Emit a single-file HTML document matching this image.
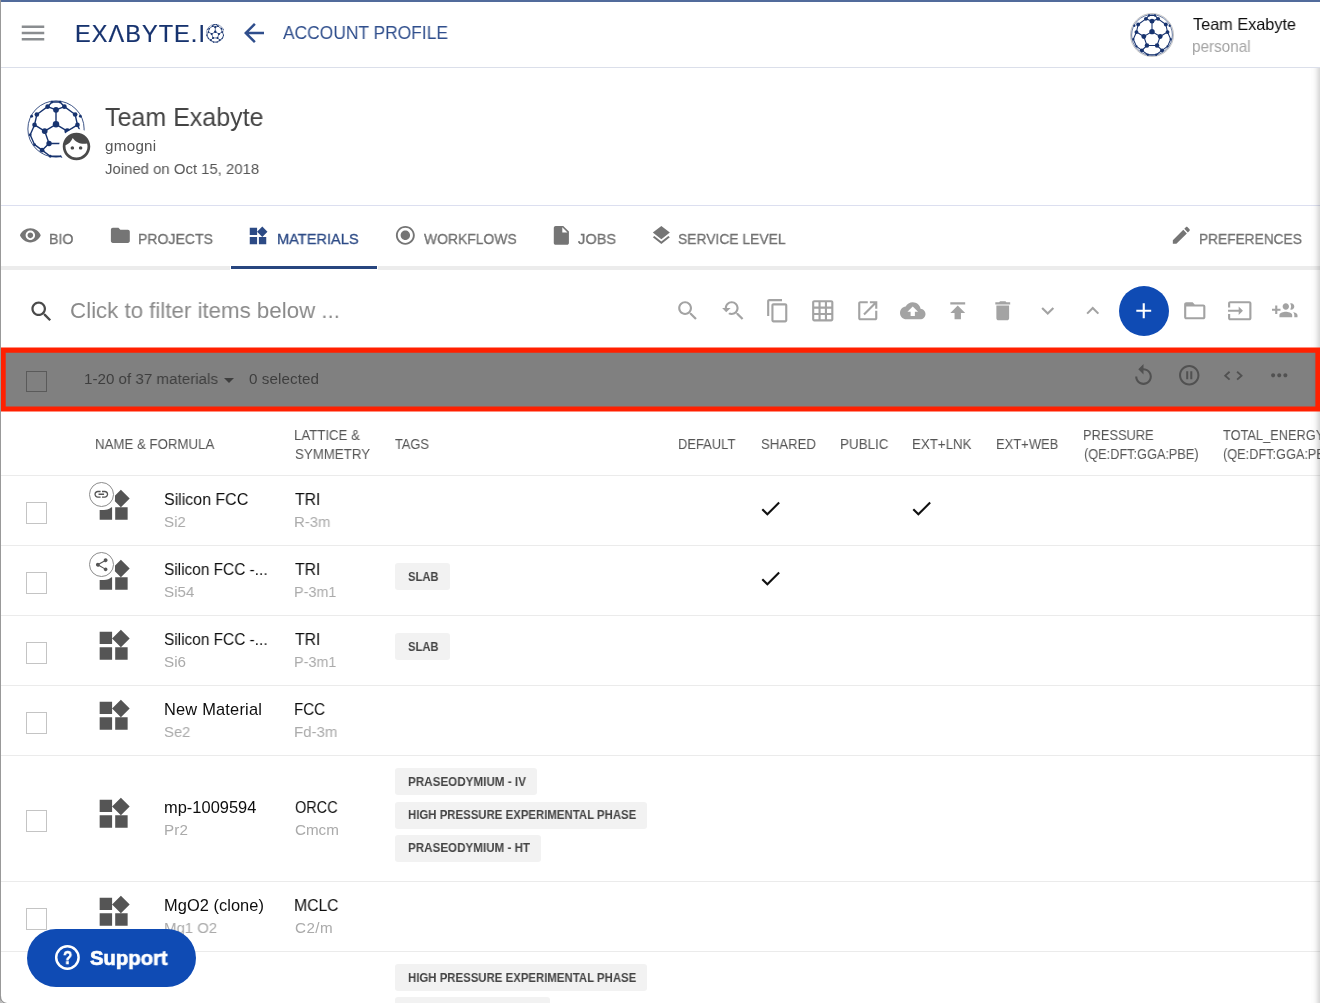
<!DOCTYPE html>
<html lang="en">
<head>
<meta charset="utf-8">
<title>Account Profile - Materials</title>
<style>
html,body{margin:0;padding:0;}
body{width:1320px;height:1003px;position:relative;overflow:hidden;background:#fff;font-family:"Liberation Sans",Arial,sans-serif;}
.t{position:absolute;white-space:pre;z-index:5;margin:0;transform-origin:0 50%;will-change:transform;}
.t.top{z-index:12;}
.i{position:absolute;z-index:5;display:block;}
.b{position:absolute;z-index:1;}
.hl{position:absolute;left:1px;width:1319px;height:1px;z-index:1;}
.cb{position:absolute;width:19px;height:20px;border:1px solid #c4c4c4;background:#fff;z-index:4;}
.chip{position:absolute;height:27px;background:#f2f2f2;border-radius:3px;z-index:2;}
</style>
</head>
<body>
<div class="b" style="left:0px;top:0px;width:1320px;height:2px;background:#516b9b;z-index:9;"></div>
<div class="b" style="left:0px;top:0px;width:1px;height:1003px;background:#999999;z-index:9;"></div>
<div class="hl" style="top:67px;background:#dbdfea;left:1px;width:1319px"></div>
<div class="hl" style="top:205px;background:#dcdff0;left:1px;width:1319px"></div>
<div class="b" style="left:1px;top:266px;width:1319px;height:4px;background:#ececec;z-index:1;"></div>
<div class="b" style="left:230px;top:266px;width:148px;height:4px;background:#ffffff;z-index:2;"></div>
<div class="b" style="left:231px;top:266px;width:146px;height:3px;background:#28467f;z-index:3;"></div>
<svg class="i" style="left:18.45px;top:17.5px;" width="30" height="30" viewBox="0 0 24 24"><path fill="#8a8d90" d="M3 18h18v-2H3v2zm0-5h18v-2H3v2zm0-7v2h18V6H3z"/></svg>
<svg class="i" style="left:238.7px;top:17.85px;" width="30" height="30" viewBox="0 0 24 24"><path fill="#2f4e8c" d="M20 11H7.83l5.59-5.59L12 4l-8 8 8 8 1.41-1.41L7.83 13H20v-2z"/></svg>
<svg class="i" style="left:18.849999999999998px;top:224.3px;" width="22.7" height="22.7" viewBox="0 0 24 24"><path fill="#757575" d="M12 4.5C7 4.5 2.73 7.61 1 12c1.73 4.39 6 7.5 11 7.5s9.27-3.11 11-7.5c-1.73-4.39-6-7.5-11-7.5zM12 17c-2.76 0-5-2.24-5-5s2.24-5 5-5 5 2.24 5 5-2.24 5-5 5zm0-8c-1.66 0-3 1.34-3 3s1.34 3 3 3 3-1.34 3-3-1.34-3-3-3z"/></svg>
<svg class="i" style="left:108.85000000000001px;top:224.3px;" width="22.7" height="22.7" viewBox="0 0 24 24"><path fill="#757575" d="M10 4H4c-1.1 0-1.99.9-1.99 2L2 18c0 1.1.9 2 2 2h16c1.1 0 2-.9 2-2V8c0-1.1-.9-2-2-2h-8l-2-2z"/></svg>
<svg class="i" style="left:393.84999999999997px;top:224.3px;" width="22.7" height="22.7" viewBox="0 0 24 24"><path fill="#757575" d="M12 7c-2.76 0-5 2.24-5 5s2.24 5 5 5 5-2.24 5-5-2.24-5-5-5zm0-5C6.48 2 2 6.48 2 12s4.48 10 10 10 10-4.48 10-10S17.52 2 12 2zm0 18c-4.42 0-8-3.58-8-8s3.58-8 8-8 8 3.58 8 8-3.58 8-8 8z"/></svg>
<svg class="i" style="left:549.9499999999999px;top:224.3px;" width="22.7" height="22.7" viewBox="0 0 24 24"><path fill="#757575" d="M6 2c-1.1 0-1.99.9-1.99 2L4 20c0 1.1.89 2 1.99 2H18c1.1 0 2-.9 2-2V8l-6-6H6zm7 7V3.5L18.5 9H13z"/></svg>
<svg class="i" style="left:649.85px;top:224.3px;" width="22.7" height="22.7" viewBox="0 0 24 24"><path fill="#757575" d="M11.99 18.54l-7.37-5.73L3 14.07l9 7 9-7-1.63-1.27-7.38 5.74zM12 16l7.36-5.73L21 9l-9-7-9 7 1.63 1.27L12 16z"/></svg>
<svg class="i" style="left:1170.25px;top:224.3px;" width="22.7" height="22.7" viewBox="0 0 24 24"><path fill="#757575" d="M3 17.25V21h3.75L17.81 9.94l-3.75-3.75L3 17.25zM20.71 7.04c.39-.39.39-1.02 0-1.41l-2.34-2.34c-.39-.39-1.02-.39-1.41 0l-1.83 1.83 3.75 3.75 1.83-1.83z"/></svg>
<svg class="i" style="left:247.25px;top:224.85px;" width="22" height="22" viewBox="0 0 24 24"><path fill="#2c4a85" d="M13 13v8h8v-8h-8zM3 21h8v-8H3v8zM3 3v8h8V3H3zm13.66-1.31L11 7.34 16.66 13l5.66-5.66-5.66-5.65z"/></svg>
<svg class="i" style="left:27.9px;top:297.9px;" width="27" height="27" viewBox="0 0 24 24"><path fill="#4a4a4a" d="M15.5 14h-.79l-.28-.27C15.41 12.59 16 11.11 16 9.5 16 5.91 13.09 3 9.5 3S3 5.910 3 9.500 5.910 16 9.500 16c1.610 0 3.090-.59 4.230-1.570l.27.28v.79l5 4.990L20.490 19l-4.990-5zm-6 0C7.010 14 5 11.990 5 9.500S7.010 5 9.500 5 14 7.010 14 9.500 11.990 14 9.500 14z"/></svg>
<svg class="i" style="left:675.25px;top:297.85px;" width="25.5" height="25.5" viewBox="0 0 24 24"><path fill="#a3a3a3" d="M15.5 14h-.79l-.28-.27C15.41 12.59 16 11.11 16 9.5 16 5.91 13.09 3 9.5 3S3 5.910 3 9.500 5.910 16 9.500 16c1.610 0 3.090-.59 4.230-1.570l.27.28v.79l5 4.990L20.490 19l-4.990-5zm-6 0C7.010 14 5 11.990 5 9.500S7.010 5 9.500 5 14 7.010 14 9.500 11.990 14 9.500 14z"/></svg>
<svg class="i" style="left:720.25px;top:297.85px;" width="25.5" height="25.5" viewBox="0 0 24 24"><path fill="#a3a3a3" d="M17.01 14h-.8l-.27-.27c.98-1.14 1.57-2.61 1.57-4.23 0-3.590-2.910-6.500-6.500-6.500s-6.500 3-6.500 6.500H2l3.840 4 4.160-4H6.510C6.510 7 8.530 5 11.010 5s4.500 2.010 4.500 4.500c0 2.480-2.020 4.500-4.500 4.500-.65 0-1.260-.14-1.820-.38L7.710 15.100c.97.57 2.090.9 3.300.9 1.610 0 3.080-.59 4.220-1.570l.27.27v.79l5.010 4.990L22 19l-4.990-5z"/></svg>
<svg class="i" style="left:765.25px;top:297.85px;" width="25.5" height="25.5" viewBox="0 0 24 24"><path fill="#a3a3a3" d="M16 1H4c-1.1 0-2 .9-2 2v14h2V3h12V1zm3 4H8c-1.100 0-2 .9-2 2v14c0 1.100.9 2 2 2h11c1.100 0 2-.9 2-2V7c0-1.100-.9-2-2-2zm0 16H8V7h11v14z"/></svg>
<svg class="i" style="left:810.25px;top:297.85px;" width="25.5" height="25.5" viewBox="0 0 24 24"><path fill="#a3a3a3" d="M20 2H4c-1.1 0-2 .9-2 2v16c0 1.100.9 2 2 2h16c1.100 0 2-.9 2-2V4c0-1.100-.9-2-2-2zM8 20H4v-4h4v4zm0-6H4v-4h4v4zm0-6H4V4h4v4zm6 12h-4v-4h4v4zm0-6h-4v-4h4v4zm0-6h-4V4h4v4zm6 12h-4v-4h4v4zm0-6h-4v-4h4v4zm0-6h-4V4h4v4z"/></svg>
<svg class="i" style="left:855.25px;top:297.85px;" width="25.5" height="25.5" viewBox="0 0 24 24"><path fill="#a3a3a3" d="M19 19H5V5h7V3H5c-1.11 0-2 .9-2 2v14c0 1.100.89 2 2 2h14c1.100 0 2-.9 2-2v-7h-2v7zM14 3v2h3.590l-9.830 9.830 1.410 1.410L19 6.410V10h2V3h-7z"/></svg>
<svg class="i" style="left:900.25px;top:297.85px;" width="25.5" height="25.5" viewBox="0 0 24 24"><path fill="#a3a3a3" d="M19.35 10.04C18.67 6.59 15.64 4 12 4 9.110 4 6.600 5.640 5.350 8.040 2.340 8.360 0 10.910 0 14c0 3.310 2.690 6 6 6h13c2.760 0 5-2.240 5-5 0-2.640-2.050-4.780-4.650-4.960zM14 13v4h-4v-4H7l5-5 5 5h-3z"/></svg>
<svg class="i" style="left:945.25px;top:297.85px;" width="25.5" height="25.5" viewBox="0 0 24 24"><path fill="#a3a3a3" d="M5 4v2h14V4H5zm0 10h4v6h6v-6h4l-7-7-7 7z"/></svg>
<svg class="i" style="left:990.25px;top:297.85px;" width="25.5" height="25.5" viewBox="0 0 24 24"><path fill="#a3a3a3" d="M6 19c0 1.1.9 2 2 2h8c1.100 0 2-.9 2-2V7H6v12zM19 4h-3.500l-1-1h-5l-1 1H5v2h14V4z"/></svg>
<svg class="i" style="left:1035.25px;top:297.85px;" width="25.5" height="25.5" viewBox="0 0 24 24"><path fill="#a3a3a3" d="M16.59 8.59L12 13.17 7.41 8.59 6 10l6 6 6-6z"/></svg>
<svg class="i" style="left:1080.25px;top:297.85px;" width="25.5" height="25.5" viewBox="0 0 24 24"><path fill="#a3a3a3" d="M12 8l-6 6 1.41 1.41L12 10.83l4.59 4.58L18 14z"/></svg>
<svg class="i" style="left:1182.25px;top:297.85px;" width="25.5" height="25.5" viewBox="0 0 24 24"><path fill="#a3a3a3" d="M20 6h-8l-2-2H4c-1.1 0-1.99.9-1.990 2L2 18c0 1.100.9 2 2 2h16c1.100 0 2-.9 2-2V8c0-1.100-.9-2-2-2zm0 12H4V8h16v10z"/></svg>
<svg class="i" style="left:1227.25px;top:297.85px;" width="25.5" height="25.5" viewBox="0 0 24 24"><path fill="#a3a3a3" d="M21 3.010H3c-1.100 0-2 .9-2 2V9h2V4.990h18v14.030H3V15H1v4.010c0 1.100.9 1.980 2 1.980h18c1.100 0 2-.88 2-1.980v-14c0-1.110-.9-2-2-2zM11 16l4-4-4-4v3H1v2h10v3z"/></svg>
<svg class="i" style="left:1272.45px;top:297.85px;" width="25.5" height="25.5" viewBox="0 0 24 24"><path fill="#a3a3a3" d="M8 10H5V7H3v3H0v2h3v3h2v-3h3v-2zm10 1c1.660 0 2.990-1.340 2.990-3S19.660 5 18 5c-.32 0-.63.05-.91.14.57.81.9 1.790.9 2.860s-.34 2.040-.9 2.860c.28.09.59.14.91.14zm-5 0c1.660 0 2.990-1.340 2.990-3S14.660 5 13 5c-1.660 0-3 1.340-3 3s1.340 3 3 3zm6.620 2.160c.83.73 1.380 1.660 1.380 2.840v2h3v-2c0-1.540-2.370-2.490-4.380-2.840zM13 13c-2 0-6 1-6 3v2h12v-2c0-2-4-3-6-3z"/></svg>
<div class="b" style="left:1119px;top:286px;width:50px;height:50px;border-radius:25px;background:#0f4bb4;z-index:4"></div>
<svg class="i" style="left:1131.2px;top:298.3px;" width="25.5" height="25.5" viewBox="0 0 24 24"><path fill="#ffffff" d="M19 13h-6v6h-2v-6H5v-2h6V5h2v6h6v2z"/></svg>
<svg class="i" style="left:0;top:340px;z-index:7" width="1320" height="80" viewBox="0 340 1320 80"><path fill-rule="evenodd" fill="#ff2000" d="M0.4 347.5H1324V411.4H0.4ZM5.7 352.8H1315.4V406.4H5.7Z"/></svg>
<div class="b" style="left:5px;top:352px;width:1311px;height:55px;background:#808080;z-index:3;"></div>
<div class="b" style="left:26px;top:371px;width:19px;height:19px;border:1px solid #5a5a5a;z-index:4"></div>
<svg class="i" style="left:217.25px;top:367.5px;" width="24" height="24" viewBox="0 0 24 24"><path fill="#3e3e3e" d="M7 10l5 5 5-5z"/></svg>
<svg class="i" style="left:1131px;top:362.8px;" width="25" height="25" viewBox="0 0 24 24"><path fill="#515151" d="M12 5V1L7 6l5 5V7c3.310 0 6 2.690 6 6s-2.690 6-6 6-6-2.690-6-6H4c0 4.420 3.580 8 8 8s8-3.580 8-8-3.580-8-8-8z"/></svg>
<svg class="i" style="left:1176.65px;top:363.25px;" width="24.5" height="24.5" viewBox="0 0 24 24"><path fill="#515151" d="M9 16h2V8H9v8zm3-14C6.480 2 2 6.480 2 12s4.480 10 10 10 10-4.480 10-10S17.520 2 12 2zm0 18c-4.410 0-8-3.590-8-8s3.590-8 8-8 8 3.590 8 8-3.590 8-8 8zm1-4h2V8h-2v8z"/></svg>
<svg class="i" style="left:1221px;top:366px" width="24" height="20" viewBox="1221 366 24 20"><path fill="none" stroke="#515151" stroke-width="1.9" d="M1229.6 371.7L1225.2 375.65L1229.6 379.6M1237.1 371.7L1241.5 375.65L1237.1 379.6"/></svg>
<svg class="i" style="left:1266.5px;top:363.3px;" width="24.5" height="24.5" viewBox="0 0 24 24"><path fill="#515151" d="M6 10c-1.100 0-2 .9-2 2s.9 2 2 2 2-.9 2-2-.9-2-2-2zm12 0c-1.100 0-2 .9-2 2s.9 2 2 2 2-.9 2-2-.9-2-2-2zm-6 0c-1.100 0-2 .9-2 2s.9 2 2 2 2-.9 2-2-.9-2-2-2z"/></svg>
<div class="hl" style="top:475px;background:#ebebeb;left:1px;width:1319px"></div>
<div class="hl" style="top:545px;background:#ebebeb;left:1px;width:1319px"></div>
<div class="hl" style="top:615px;background:#ebebeb;left:1px;width:1319px"></div>
<div class="hl" style="top:685px;background:#ebebeb;left:1px;width:1319px"></div>
<div class="hl" style="top:755px;background:#ebebeb;left:1px;width:1319px"></div>
<div class="hl" style="top:881px;background:#ebebeb;left:1px;width:1319px"></div>
<div class="hl" style="top:951px;background:#ebebeb;left:1px;width:1319px"></div>
<div class="cb" style="left:26px;top:502px"></div>
<div class="cb" style="left:26px;top:572px"></div>
<div class="cb" style="left:26px;top:642px"></div>
<div class="cb" style="left:26px;top:712px"></div>
<div class="cb" style="left:26px;top:810px"></div>
<div class="cb" style="left:26px;top:908px"></div>
<svg class="i" style="left:94.6px;top:487.4px;" width="37.3" height="37.3" viewBox="0 0 24 24"><path fill="#555555" d="M13 13v8h8v-8h-8zM3 21h8v-8H3v8zM3 3v8h8V3H3zm13.66-1.31L11 7.34 16.66 13l5.66-5.66-5.66-5.65z"/></svg>
<svg class="i" style="left:94.6px;top:557.4px;" width="37.3" height="37.3" viewBox="0 0 24 24"><path fill="#555555" d="M13 13v8h8v-8h-8zM3 21h8v-8H3v8zM3 3v8h8V3H3zm13.66-1.31L11 7.34 16.66 13l5.66-5.66-5.66-5.65z"/></svg>
<svg class="i" style="left:94.6px;top:627.4px;" width="37.3" height="37.3" viewBox="0 0 24 24"><path fill="#555555" d="M13 13v8h8v-8h-8zM3 21h8v-8H3v8zM3 3v8h8V3H3zm13.66-1.31L11 7.34 16.66 13l5.66-5.66-5.66-5.65z"/></svg>
<svg class="i" style="left:94.6px;top:697.4px;" width="37.3" height="37.3" viewBox="0 0 24 24"><path fill="#555555" d="M13 13v8h8v-8h-8zM3 21h8v-8H3v8zM3 3v8h8V3H3zm13.66-1.31L11 7.34 16.66 13l5.66-5.66-5.66-5.65z"/></svg>
<svg class="i" style="left:94.6px;top:795.4px;" width="37.3" height="37.3" viewBox="0 0 24 24"><path fill="#555555" d="M13 13v8h8v-8h-8zM3 21h8v-8H3v8zM3 3v8h8V3H3zm13.66-1.31L11 7.34 16.66 13l5.66-5.66-5.66-5.65z"/></svg>
<svg class="i" style="left:94.6px;top:893.4px;" width="37.3" height="37.3" viewBox="0 0 24 24"><path fill="#555555" d="M13 13v8h8v-8h-8zM3 21h8v-8H3v8zM3 3v8h8V3H3zm13.66-1.31L11 7.34 16.66 13l5.66-5.66-5.66-5.65z"/></svg>
<div class="b" style="left:87px;top:480px;width:28px;height:30px;border-radius:11px;background:#fff;z-index:6"></div>
<div class="b" style="left:88.9px;top:481.9px;width:23px;height:23px;border:1px solid #8c8c8c;border-radius:50%;background:#fff;z-index:6"></div>
<svg class="i" style="left:93.10000000000001px;top:486.09999999999997px;z-index:7" width="16.6" height="16.6" viewBox="0 0 24 24"><path fill="#555555" d="M3.900 12c0-1.710 1.390-3.100 3.100-3.100h4V7H7c-2.760 0-5 2.240-5 5s2.240 5 5 5h4v-1.900H7c-1.710 0-3.100-1.390-3.100-3.100zM8 13h8v-2H8v2zm9-6h-4v1.900h4c1.710 0 3.100 1.390 3.100 3.100s-1.390 3.100-3.100 3.100h-4V17h4c2.760 0 5-2.240 5-5s-2.240-5-5-5z"/></svg>
<div class="b" style="left:87px;top:550px;width:28px;height:30px;border-radius:11px;background:#fff;z-index:6"></div>
<div class="b" style="left:88.9px;top:551.9px;width:23px;height:23px;border:1px solid #8c8c8c;border-radius:50%;background:#fff;z-index:6"></div>
<svg class="i" style="left:93.65px;top:556.65px;z-index:7" width="15.5" height="15.5" viewBox="0 0 24 24"><path fill="#555555" d="M18 16.080c-.76 0-1.440.3-1.960.77L8.910 12.700c.05-.23.09-.46.09-.7s-.04-.47-.09-.7l7.050-4.110c.54.5 1.250.81 2.040.81 1.660 0 3-1.340 3-3s-1.340-3-3-3-3 1.340-3 3c0 .24.04.47.09.7L8.040 9.810C7.500 9.310 6.790 9 6 9c-1.660 0-3 1.340-3 3s1.340 3 3 3c.79 0 1.500-.31 2.040-.81l7.120 4.160c-.05.21-.08.43-.08.65 0 1.610 1.310 2.920 2.920 2.920 1.610 0 2.920-1.310 2.920-2.920s-1.310-2.920-2.920-2.920z"/></svg>
<div class="chip" style="left:395px;top:563px;width:55px"></div>
<div class="chip" style="left:395px;top:633px;width:55px"></div>
<div class="chip" style="left:395px;top:768px;width:142px"></div>
<div class="chip" style="left:395px;top:802px;width:252px"></div>
<div class="chip" style="left:395px;top:835px;width:146px"></div>
<div class="chip" style="left:395px;top:964px;width:252px"></div>
<div class="chip" style="left:395px;top:997px;width:155px"></div>
<svg class="i" style="left:758.0px;top:495.90000000000003px;" width="25" height="25" viewBox="0 0 24 24"><path fill="#111111" d="M9 16.170L4.830 12l-1.420 1.410L9 19 21 7l-1.410-1.410z"/></svg>
<svg class="i" style="left:909.4px;top:495.90000000000003px;" width="25" height="25" viewBox="0 0 24 24"><path fill="#111111" d="M9 16.170L4.830 12l-1.420 1.410L9 19 21 7l-1.410-1.410z"/></svg>
<svg class="i" style="left:758.0px;top:565.9px;" width="25" height="25" viewBox="0 0 24 24"><path fill="#111111" d="M9 16.170L4.830 12l-1.420 1.410L9 19 21 7l-1.410-1.410z"/></svg>
<div class="b" style="left:1310px;top:68px;width:10px;height:935px;z-index:6;background:linear-gradient(to right,rgba(0,0,0,0) 0%,rgba(0,0,0,0.012) 30%,rgba(0,0,0,0.03) 50%,rgba(0,0,0,0.05) 60%,rgba(0,0,0,0.08) 70%,rgba(0,0,0,0.11) 80%,rgba(0,0,0,0.145) 95%,rgba(0,0,0,0.15) 100%)"></div>
<div class="b" style="left:27px;top:929px;width:169px;height:58px;border-radius:29px;background:#0f4bb4;z-index:11"></div>
<svg class="i" style="left:54px;top:944px;z-index:12" width="27" height="27" viewBox="0 0 27 27"><circle cx="13.4" cy="13.5" r="11.2" fill="none" stroke="#fff" stroke-width="2.5"/></svg>
<div class="b" style="left:1130px;top:13px;width:42px;height:42px;border:1px solid #c4c4c4;border-radius:50%;z-index:4"></div>
<svg class="i" style="left:1130.7px;top:13.799999999999997px;z-index:5" width="42" height="42" viewBox="0 0 100 100"><circle cx="50" cy="50" r="48.5" fill="#fff" stroke="#17336f" stroke-width="1.50"/><path d="M50 17L50 42M50 42L30.5 53.5M50 42L69.5 53.5M30.5 53.5L38 75M69.5 53.5L62 75M38 75L62 75M50 17L35.5 11.5M50 17L64.5 11.5M35.5 11.5L17 25M64.5 11.5L83 25M17 25L13 43M83 25L87 43M13 43L30.5 53.5M87 43L69.5 53.5M38 75L26 86.5M62 75L74 86.5M35.5 11.5L43 3.5M64.5 11.5L57 3.5M13 43L5.5 60M87 43L94.5 60M13 77L26 86.5M87 77L74 86.5M26 86.5L40 97M74 86.5L60 97M5.5 60L13 77M94.5 60L87 77M40 97L60 97M43 3.5L57 3.5" fill="none" stroke="#17336f" stroke-width="2.5" stroke-linecap="round"/><circle cx="50" cy="17" r="5.75" fill="#17336f"/><circle cx="50" cy="42" r="6.4399999999999995" fill="#17336f"/><circle cx="30.5" cy="53.5" r="5.75" fill="#17336f"/><circle cx="69.5" cy="53.5" r="5.75" fill="#17336f"/><circle cx="38" cy="75" r="5.289999999999999" fill="#17336f"/><circle cx="62" cy="75" r="5.289999999999999" fill="#17336f"/><circle cx="35.5" cy="11.5" r="4.6" fill="#17336f"/><circle cx="64.5" cy="11.5" r="4.6" fill="#17336f"/><circle cx="17" cy="25" r="4.6" fill="#17336f"/><circle cx="83" cy="25" r="4.6" fill="#17336f"/><circle cx="13" cy="43" r="4.6" fill="#17336f"/><circle cx="87" cy="43" r="4.6" fill="#17336f"/><circle cx="26" cy="86.5" r="4.6" fill="#17336f"/><circle cx="74" cy="86.5" r="4.6" fill="#17336f"/><circle cx="43" cy="3.5" r="2.76" fill="#17336f"/><circle cx="57" cy="3.5" r="2.76" fill="#17336f"/><circle cx="5.5" cy="60" r="2.76" fill="#17336f"/><circle cx="13" cy="77" r="2.76" fill="#17336f"/><circle cx="94.5" cy="60" r="2.76" fill="#17336f"/><circle cx="87" cy="77" r="2.76" fill="#17336f"/><circle cx="40" cy="97" r="2.76" fill="#17336f"/><circle cx="60" cy="97" r="2.76" fill="#17336f"/><circle cx="8" cy="28" r="2.76" fill="#17336f"/><circle cx="92" cy="28" r="2.76" fill="#17336f"/></svg>
<svg class="i" style="left:27.0px;top:99.5px;z-index:5" width="58" height="58" viewBox="0 0 100 100"><circle cx="50" cy="50" r="48.5" fill="#fff" stroke="#17336f" stroke-width="1.44"/><path d="M50 17L50 42M50 42L30.5 53.5M50 42L69.5 53.5M30.5 53.5L38 75M69.5 53.5L62 75M38 75L62 75M50 17L35.5 11.5M50 17L64.5 11.5M35.5 11.5L17 25M64.5 11.5L83 25M17 25L13 43M83 25L87 43M13 43L30.5 53.5M87 43L69.5 53.5M38 75L26 86.5M62 75L74 86.5M35.5 11.5L43 3.5M64.5 11.5L57 3.5M13 43L5.5 60M87 43L94.5 60M13 77L26 86.5M87 77L74 86.5M26 86.5L40 97M74 86.5L60 97M5.5 60L13 77M94.5 60L87 77M40 97L60 97M43 3.5L57 3.5" fill="none" stroke="#17336f" stroke-width="2.4" stroke-linecap="round"/><circle cx="50" cy="17" r="5.0" fill="#17336f"/><circle cx="50" cy="42" r="5.6" fill="#17336f"/><circle cx="30.5" cy="53.5" r="5.0" fill="#17336f"/><circle cx="69.5" cy="53.5" r="5.0" fill="#17336f"/><circle cx="38" cy="75" r="4.6" fill="#17336f"/><circle cx="62" cy="75" r="4.6" fill="#17336f"/><circle cx="35.5" cy="11.5" r="4.0" fill="#17336f"/><circle cx="64.5" cy="11.5" r="4.0" fill="#17336f"/><circle cx="17" cy="25" r="4.0" fill="#17336f"/><circle cx="83" cy="25" r="4.0" fill="#17336f"/><circle cx="13" cy="43" r="4.0" fill="#17336f"/><circle cx="87" cy="43" r="4.0" fill="#17336f"/><circle cx="26" cy="86.5" r="4.0" fill="#17336f"/><circle cx="74" cy="86.5" r="4.0" fill="#17336f"/><circle cx="43" cy="3.5" r="2.4" fill="#17336f"/><circle cx="57" cy="3.5" r="2.4" fill="#17336f"/><circle cx="5.5" cy="60" r="2.4" fill="#17336f"/><circle cx="13" cy="77" r="2.4" fill="#17336f"/><circle cx="94.5" cy="60" r="2.4" fill="#17336f"/><circle cx="87" cy="77" r="2.4" fill="#17336f"/><circle cx="40" cy="97" r="2.4" fill="#17336f"/><circle cx="60" cy="97" r="2.4" fill="#17336f"/><circle cx="8" cy="28" r="2.4" fill="#17336f"/><circle cx="92" cy="28" r="2.4" fill="#17336f"/></svg>
<div class="b" style="left:58.6px;top:128.8px;width:36px;height:36px;border-radius:50%;background:#fff;z-index:6"></div>
<svg class="i" style="left:60.1px;top:130.3px;z-index:7" width="33" height="33" viewBox="0 0 24 24"><path fill="#4a4a4a" d="M9 11.750c-.69 0-1.250.56-1.250 1.250s.56 1.250 1.250 1.250 1.250-.56 1.250-1.250-.56-1.250-1.250-1.250zm6 0c-.69 0-1.250.56-1.250 1.250s.56 1.250 1.250 1.250 1.250-.56 1.250-1.250-.56-1.250-1.250-1.250zM12 2C6.480 2 2 6.480 2 12s4.480 10 10 10 10-4.480 10-10S17.520 2 12 2zm0 18c-4.410 0-8-3.590-8-8 0-.29.02-.58.05-.86 2.360-1.050 4.230-2.980 5.210-5.370C11.070 8.330 14.050 10 17.420 10c.78 0 1.530-.09 2.250-.26.210.71.330 1.470.330 2.260 0 4.410-3.590 8-8 8z"/></svg>
<svg class="i" style="left:205.5px;top:24.2px;z-index:5" width="18.6" height="18.6" viewBox="0 0 100 100"><circle cx="50" cy="50" r="48.5" fill="#fff" stroke="#17336f" stroke-width="2.16"/><path d="M50 17L50 42M50 42L30.5 53.5M50 42L69.5 53.5M30.5 53.5L38 75M69.5 53.5L62 75M38 75L62 75M50 17L35.5 11.5M50 17L64.5 11.5M35.5 11.5L17 25M64.5 11.5L83 25M17 25L13 43M83 25L87 43M13 43L30.5 53.5M87 43L69.5 53.5M38 75L26 86.5M62 75L74 86.5M35.5 11.5L43 3.5M64.5 11.5L57 3.5M13 43L5.5 60M87 43L94.5 60M13 77L26 86.5M87 77L74 86.5M26 86.5L40 97M74 86.5L60 97M5.5 60L13 77M94.5 60L87 77M40 97L60 97M43 3.5L57 3.5" fill="none" stroke="#17336f" stroke-width="3.6" stroke-linecap="round"/><circle cx="50" cy="17" r="5.75" fill="#17336f"/><circle cx="50" cy="42" r="6.4399999999999995" fill="#17336f"/><circle cx="30.5" cy="53.5" r="5.75" fill="#17336f"/><circle cx="69.5" cy="53.5" r="5.75" fill="#17336f"/><circle cx="38" cy="75" r="5.289999999999999" fill="#17336f"/><circle cx="62" cy="75" r="5.289999999999999" fill="#17336f"/><circle cx="35.5" cy="11.5" r="4.6" fill="#17336f"/><circle cx="64.5" cy="11.5" r="4.6" fill="#17336f"/><circle cx="17" cy="25" r="4.6" fill="#17336f"/><circle cx="83" cy="25" r="4.6" fill="#17336f"/><circle cx="13" cy="43" r="4.6" fill="#17336f"/><circle cx="87" cy="43" r="4.6" fill="#17336f"/><circle cx="26" cy="86.5" r="4.6" fill="#17336f"/><circle cx="74" cy="86.5" r="4.6" fill="#17336f"/><circle cx="43" cy="3.5" r="2.76" fill="#17336f"/><circle cx="57" cy="3.5" r="2.76" fill="#17336f"/><circle cx="5.5" cy="60" r="2.76" fill="#17336f"/><circle cx="13" cy="77" r="2.76" fill="#17336f"/><circle cx="94.5" cy="60" r="2.76" fill="#17336f"/><circle cx="87" cy="77" r="2.76" fill="#17336f"/><circle cx="40" cy="97" r="2.76" fill="#17336f"/><circle cx="60" cy="97" r="2.76" fill="#17336f"/><circle cx="8" cy="28" r="2.76" fill="#17336f"/><circle cx="92" cy="28" r="2.76" fill="#17336f"/></svg>
<svg class="i" style="left:0;top:993px;z-index:13" width="10" height="10" viewBox="0 993 10 10"><path d="M0 998Q0.6 1002.6 5.5 1003.6L0 1003.6Z" fill="#bdbdbd"/><path d="M0.5 996Q0.5 1002.8 7 1003.5" fill="none" stroke="#949494" stroke-width="1.1"/></svg>
<div class="t " style="left:74.53px;top:23.00px;font-size:23.5px;line-height:23.5px;color:#17336f;letter-spacing:1.053px;-webkit-text-stroke:0.2px #17336f;">EXΛBYTE.I</div>
<div class="t " style="left:282.70px;top:23.70px;font-size:18.4px;line-height:18.4px;color:#2f4e8c;transform:scaleX(0.9456);">ACCOUNT PROFILE</div>
<div class="t " style="left:1192.59px;top:15.80px;font-size:16.5px;line-height:16.5px;color:#0d0d0d;transform:scaleX(0.9855);">Team Exabyte</div>
<div class="t " style="left:1192.32px;top:38.70px;font-size:15.7px;line-height:15.7px;color:#a4a4a4;transform:scaleX(0.9727);">personal</div>
<div class="t " style="left:104.91px;top:104.70px;font-size:25.4px;line-height:25.4px;color:#444444;transform:scaleX(0.9850);">Team Exabyte</div>
<div class="t " style="left:104.81px;top:137.60px;font-size:15.2px;line-height:15.2px;color:#555555;letter-spacing:0.278px;">gmogni</div>
<div class="t " style="left:104.91px;top:160.80px;font-size:15.1px;line-height:15.1px;color:#555555;transform:scaleX(0.9876);">Joined on Oct 15, 2018</div>
<div class="t " style="left:48.94px;top:231.70px;font-size:14.8px;line-height:14.8px;color:#707070;transform:scaleX(0.9571);-webkit-text-stroke:0.3px #707070;">BIO</div>
<div class="t " style="left:137.94px;top:231.70px;font-size:14.8px;line-height:14.8px;color:#707070;transform:scaleX(0.9505);-webkit-text-stroke:0.3px #707070;">PROJECTS</div>
<div class="t " style="left:423.69px;top:231.70px;font-size:14.8px;line-height:14.8px;color:#707070;transform:scaleX(0.9397);-webkit-text-stroke:0.3px #707070;">WORKFLOWS</div>
<div class="t " style="left:577.64px;top:231.70px;font-size:14.8px;line-height:14.8px;color:#707070;transform:scaleX(0.9849);-webkit-text-stroke:0.3px #707070;">JOBS</div>
<div class="t " style="left:677.92px;top:231.70px;font-size:14.8px;line-height:14.8px;color:#707070;transform:scaleX(0.9360);-webkit-text-stroke:0.3px #707070;">SERVICE LEVEL</div>
<div class="t " style="left:1198.66px;top:231.70px;font-size:14.8px;line-height:14.8px;color:#707070;transform:scaleX(0.9260);-webkit-text-stroke:0.3px #707070;">PREFERENCES</div>
<div class="t " style="left:277.11px;top:231.70px;font-size:14.8px;line-height:14.8px;color:#2c4a85;transform:scaleX(0.9848);-webkit-text-stroke:0.3px #2c4a85;">MATERIALS</div>
<div class="t " style="left:69.82px;top:300.00px;font-size:22.4px;line-height:22.4px;color:#8a8a8a;transform:scaleX(0.9951);">Click to filter items below ...</div>
<div class="t ov" style="left:84.06px;top:371.25px;font-size:15.2px;line-height:15.2px;color:#3e3e3e;transform:scaleX(0.9975);">1-20 of 37 materials</div>
<div class="t ov" style="left:249.37px;top:371.25px;font-size:15.2px;line-height:15.2px;color:#3e3e3e;letter-spacing:0.090px;">0 selected</div>
<div class="t " style="left:94.89px;top:437.25px;font-size:14.2px;line-height:14.2px;color:#555555;transform:scaleX(0.9341);">NAME &amp; FORMULA</div>
<div class="t " style="left:294.14px;top:428.00px;font-size:14.2px;line-height:14.2px;color:#555555;transform:scaleX(0.9317);">LATTICE &amp;</div>
<div class="t " style="left:294.50px;top:447.00px;font-size:14.2px;line-height:14.2px;color:#555555;transform:scaleX(0.9362);">SYMMETRY</div>
<div class="t " style="left:394.98px;top:437.10px;font-size:14.2px;line-height:14.2px;color:#555555;transform:scaleX(0.9056);">TAGS</div>
<div class="t " style="left:678.16px;top:437.10px;font-size:14.2px;line-height:14.2px;color:#555555;transform:scaleX(0.9118);">DEFAULT</div>
<div class="t " style="left:761.00px;top:437.10px;font-size:14.2px;line-height:14.2px;color:#555555;transform:scaleX(0.9265);">SHARED</div>
<div class="t " style="left:840.12px;top:437.10px;font-size:14.2px;line-height:14.2px;color:#555555;transform:scaleX(0.9453);">PUBLIC</div>
<div class="t " style="left:912.13px;top:437.10px;font-size:14.2px;line-height:14.2px;color:#555555;transform:scaleX(0.9371);">EXT+LNK</div>
<div class="t " style="left:996.16px;top:437.10px;font-size:14.2px;line-height:14.2px;color:#555555;transform:scaleX(0.9131);">EXT+WEB</div>
<div class="t " style="left:1083.17px;top:428.00px;font-size:14.2px;line-height:14.2px;color:#555555;transform:scaleX(0.9055);">PRESSURE</div>
<div class="t " style="left:1083.54px;top:447.00px;font-size:14.2px;line-height:14.2px;color:#555555;transform:scaleX(0.8973);">(QE:DFT:GGA:PBE)</div>
<div class="t " style="left:1222.98px;top:428.00px;font-size:14.2px;line-height:14.2px;color:#555555;transform:scaleX(0.9022);">TOTAL_ENERGY</div>
<div class="t " style="left:1222.54px;top:447.00px;font-size:14.2px;line-height:14.2px;color:#555555;transform:scaleX(0.8973);">(QE:DFT:GGA:PBE)</div>
<div class="t " style="left:164.27px;top:491.00px;font-size:16.4px;line-height:16.4px;color:#0d0d0d;transform:scaleX(0.9737);">Silicon FCC</div>
<div class="t " style="left:164.23px;top:513.80px;font-size:15.2px;line-height:15.2px;color:#aaaaaa;transform:scaleX(0.9883);">Si2</div>
<div class="t " style="left:295.10px;top:491.00px;font-size:16.4px;line-height:16.4px;color:#0d0d0d;transform:scaleX(0.9636);">TRI</div>
<div class="t " style="left:294.21px;top:513.80px;font-size:15.2px;line-height:15.2px;color:#aaaaaa;transform:scaleX(0.9808);">R-3m</div>
<div class="t " style="left:164.30px;top:561.00px;font-size:16.4px;line-height:16.4px;color:#0d0d0d;transform:scaleX(0.9401);">Silicon FCC -...</div>
<div class="t " style="left:164.22px;top:583.80px;font-size:15.2px;line-height:15.2px;color:#aaaaaa;transform:scaleX(0.9940);">Si54</div>
<div class="t " style="left:295.10px;top:561.00px;font-size:16.4px;line-height:16.4px;color:#0d0d0d;transform:scaleX(0.9636);">TRI</div>
<div class="t " style="left:294.25px;top:583.80px;font-size:15.2px;line-height:15.2px;color:#aaaaaa;transform:scaleX(0.9456);">P-3m1</div>
<div class="t " style="left:164.30px;top:631.00px;font-size:16.4px;line-height:16.4px;color:#0d0d0d;transform:scaleX(0.9401);">Silicon FCC -...</div>
<div class="t " style="left:164.22px;top:653.80px;font-size:15.2px;line-height:15.2px;color:#aaaaaa;letter-spacing:0.011px;">Si6</div>
<div class="t " style="left:295.10px;top:631.00px;font-size:16.4px;line-height:16.4px;color:#0d0d0d;transform:scaleX(0.9636);">TRI</div>
<div class="t " style="left:294.25px;top:653.80px;font-size:15.2px;line-height:15.2px;color:#aaaaaa;transform:scaleX(0.9456);">P-3m1</div>
<div class="t " style="left:163.71px;top:701.00px;font-size:16.4px;line-height:16.4px;color:#0d0d0d;letter-spacing:0.207px;">New Material</div>
<div class="t " style="left:164.24px;top:723.80px;font-size:15.2px;line-height:15.2px;color:#aaaaaa;transform:scaleX(0.9749);">Se2</div>
<div class="t " style="left:294.22px;top:701.00px;font-size:16.4px;line-height:16.4px;color:#0d0d0d;transform:scaleX(0.9233);">FCC</div>
<div class="t " style="left:294.20px;top:723.80px;font-size:15.2px;line-height:15.2px;color:#aaaaaa;transform:scaleX(0.9879);">Fd-3m</div>
<div class="t " style="left:163.88px;top:799.00px;font-size:16.4px;line-height:16.4px;color:#0d0d0d;letter-spacing:0.035px;">mp-1009594</div>
<div class="t " style="left:163.78px;top:821.80px;font-size:15.2px;line-height:15.2px;color:#aaaaaa;letter-spacing:0.138px;">Pr2</div>
<div class="t " style="left:294.82px;top:799.00px;font-size:16.4px;line-height:16.4px;color:#0d0d0d;transform:scaleX(0.8821);">ORCC</div>
<div class="t " style="left:294.73px;top:821.80px;font-size:15.2px;line-height:15.2px;color:#aaaaaa;transform:scaleX(0.9988);">Cmcm</div>
<div class="t " style="left:163.71px;top:897.00px;font-size:16.4px;line-height:16.4px;color:#0d0d0d;letter-spacing:0.054px;">MgO2 (clone)</div>
<div class="t " style="left:163.80px;top:919.80px;font-size:15.2px;line-height:15.2px;color:#aaaaaa;transform:scaleX(0.9845);">Mg1 O2</div>
<div class="t " style="left:294.17px;top:897.00px;font-size:16.4px;line-height:16.4px;color:#0d0d0d;transform:scaleX(0.9595);">MCLC</div>
<div class="t " style="left:294.73px;top:919.80px;font-size:15.2px;line-height:15.2px;color:#aaaaaa;letter-spacing:0.462px;">C2/m</div>
<div class="t " style="left:408.34px;top:570.50px;font-size:12.3px;line-height:12.3px;color:#444444;transform:scaleX(0.9132);font-weight:700;">SLAB</div>
<div class="t " style="left:408.34px;top:640.50px;font-size:12.3px;line-height:12.3px;color:#444444;transform:scaleX(0.9132);font-weight:700;">SLAB</div>
<div class="t " style="left:408.15px;top:776.00px;font-size:12.3px;line-height:12.3px;color:#444444;transform:scaleX(0.9480);font-weight:700;">PRASEODYMIUM - IV</div>
<div class="t " style="left:408.17px;top:809.25px;font-size:12.3px;line-height:12.3px;color:#444444;transform:scaleX(0.9271);font-weight:700;">HIGH PRESSURE EXPERIMENTAL PHASE</div>
<div class="t " style="left:408.15px;top:842.00px;font-size:12.3px;line-height:12.3px;color:#444444;transform:scaleX(0.9453);font-weight:700;">PRASEODYMIUM - HT</div>
<div class="t " style="left:408.17px;top:972.00px;font-size:12.3px;line-height:12.3px;color:#444444;transform:scaleX(0.9271);font-weight:700;">HIGH PRESSURE EXPERIMENTAL PHASE</div>
<div class="t top" style="left:89.65px;top:948.00px;font-size:20.4px;line-height:20.4px;color:#ffffff;transform:scaleX(0.9940);font-weight:700;-webkit-text-stroke:0.7px #ffffff;">Support</div>
<div class="t top" style="left:63.25px;top:949.30px;font-size:18.3px;line-height:18.3px;color:#ffffff;transform:scaleX(0.8391);font-weight:700;-webkit-text-stroke:0.45px #ffffff;">?</div>
</body>
</html>
